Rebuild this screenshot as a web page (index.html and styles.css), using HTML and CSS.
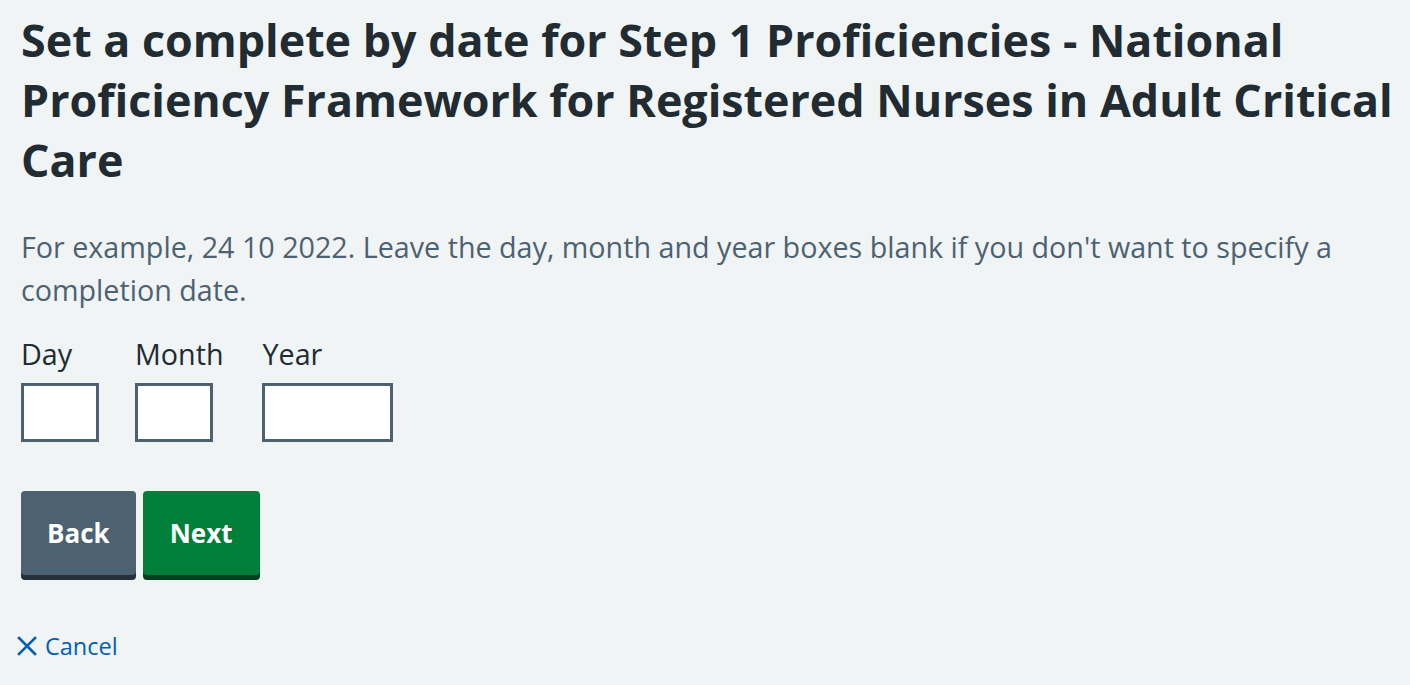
FILE: index.html
```html
<!DOCTYPE html>
<html lang="en">
<head>
<meta charset="utf-8">
<title>Set a complete by date</title>
<link rel="stylesheet" href="styles.css">
</head>
<body>
<main class="page">
  <h1 class="title">Set a complete by date for Step 1 Proficiencies - National Proficiency Framework for Registered Nurses in Adult Critical Care</h1>
  <p class="hint">For example, 24 10 2022. Leave the day, month and year boxes blank if you don't want to specify a completion date.</p>
  <div class="date-input">
    <div class="date-item">
      <label class="date-label" for="day">Day</label>
      <input class="date-field" id="day" type="text">
    </div>
    <div class="date-item">
      <label class="date-label" for="month">Month</label>
      <input class="date-field" id="month" type="text">
    </div>
    <div class="date-item">
      <label class="date-label" for="year">Year</label>
      <input class="date-field date-field-year" id="year" type="text">
    </div>
  </div>
  <div class="actions">
    <button class="btn btn-secondary" type="button">Back</button>
    <button class="btn btn-primary" type="button">Next</button>
  </div>
  <a class="cancel" href="#">
    <svg class="cancel-icon" viewBox="0 0 20 20" width="20" height="20" aria-hidden="true"><path d="M2 2 L18 18 M18 2 L2 18" stroke="#005eb8" stroke-width="2.6" fill="none" stroke-linecap="square"/></svg>
    <span>Cancel</span>
  </a>
</main>
</body>
</html>
```
FILE: styles.css
```css
html, body {
  margin: 0;
  padding: 0;
}
body {
  background: #f0f4f5;
  color: #212b32;
  font-family: "Open Sans", "Noto Sans", Arial, sans-serif;
}
.page {
  padding: 10px 10px 0 21px;
  width: 1410px;
  box-sizing: border-box;
}
.title {
  margin: 0;
  font-size: 44.8px;
  line-height: 60px;
  font-weight: 700;
  color: #212b32;
}
.hint {
  margin: 35px 0 0;
  font-size: 28.7px;
  line-height: 43px;
  color: #4c6272;
}
.date-input {
  display: flex;
  gap: 36px;
  margin-top: 25px;
}
.date-item {
  display: flex;
  flex-direction: column;
  align-items: flex-start;
}
.date-label {
  font-size: 28.7px;
  line-height: 36px;
  color: #212b32;
  margin-bottom: 11px;
  padding-right: 3px;
}
.date-field {
  width: 78px;
  height: 59px;
  box-sizing: border-box;
  border: 3px solid #4c6272;
  background: #fff;
  margin: 0;
  padding: 0 8px;
  border-radius: 0;
  font: inherit;
}
.date-field-year {
  width: 131px;
}
.actions {
  display: flex;
  gap: 7px;
  margin-top: 49px;
}
.btn {
  height: 84px;
  padding: 0 27px;
  border: 0;
  border-radius: 4px;
  font-family: inherit;
  font-size: 26px;
  font-weight: 700;
  color: #fff;
  cursor: pointer;
}
.btn-secondary {
  padding: 0 26px;
  background: #4c6272;
  box-shadow: 0 5px 0 #263139;
}
.btn-primary {
  background: #007f3b;
  box-shadow: 0 5px 0 #00401e;
}
.cancel {
  display: inline-flex;
  align-items: center;
  gap: 8px;
  margin: 55px 0 0 -4px;
  color: #005eb8;
  text-decoration: none;
  font-size: 23.5px;
  line-height: 32px;
}
.cancel-icon {
  display: block;
}
```
